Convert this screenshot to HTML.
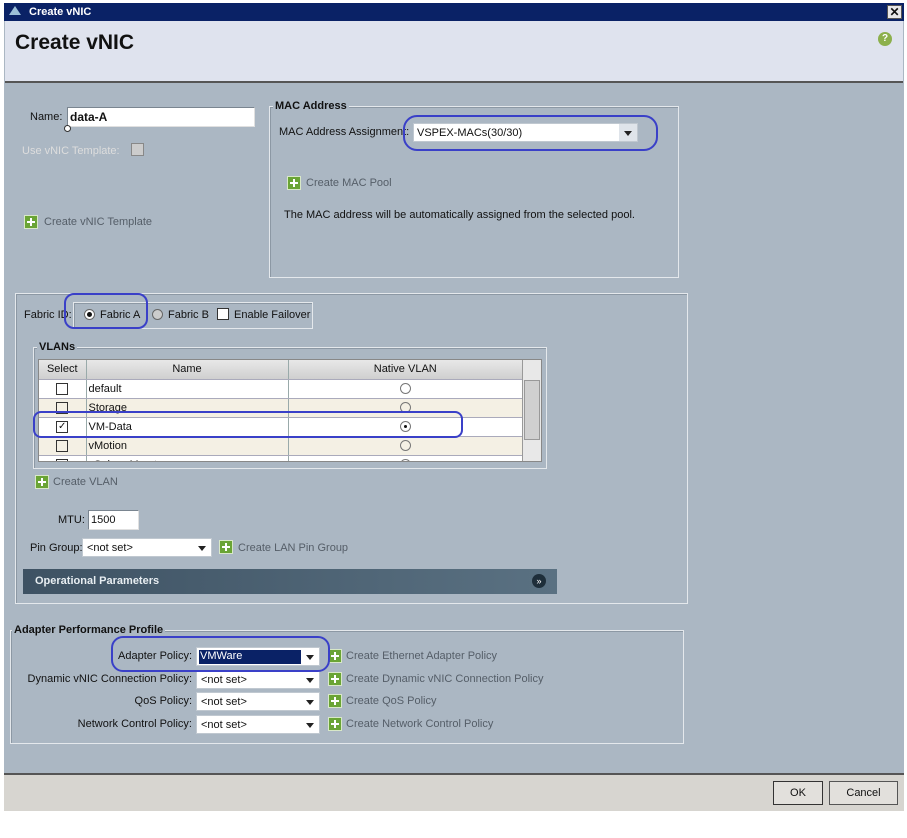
<!DOCTYPE html>
<html><head><meta charset="utf-8"><style>
*{box-sizing:border-box;margin:0;padding:0}
body{width:907px;height:838px;background:#fff;position:relative;font-family:"Liberation Sans",sans-serif;font-size:11px;color:#111;overflow:hidden}
.a{position:absolute}
.fs{position:absolute;border:1px solid #e4e8ec;box-shadow:inset 1px 1px 0 #8c98a4}
.lg{position:absolute;background:#abb7c3;font-weight:bold;font-size:11px;padding:0 2px;color:#111}
.inp{position:absolute;background:#fff;border:1px solid #7a8590;border-right-color:#e0e0e0;border-bottom-color:#e0e0e0}
.sel{position:absolute;background:#fff;border:1px solid #c0c8d0}
.sel .ar{position:absolute;right:0;top:0;bottom:0;width:18px;background:#dfe4ea}
.sel .ar:after{content:"";position:absolute;left:5px;top:7px;border-left:4px solid transparent;border-right:4px solid transparent;border-top:5px solid #222}
.plus{position:absolute;width:14px;height:14px;background:#6aa435;border:1px solid #d8e8c8}
.plus:before{content:"";position:absolute;left:2px;top:5px;width:8px;height:2px;background:#fff}
.plus:after{content:"";position:absolute;left:5px;top:2px;width:2px;height:8px;background:#fff}
.lnk{position:absolute;color:#555e68}
.cb{position:absolute;width:12px;height:12px;background:#fff;border:1px solid #333}
.rd{position:absolute;width:11px;height:11px;border-radius:50%;border:1px solid #666;background:#fff}
.ov{position:absolute;border:2.5px solid #3a40c8;border-radius:10px}
td,th{font-size:11px;font-weight:normal;border-right:1px solid #9aa;border-bottom:1px solid #aab;height:19px;padding:0 2px}
.r{display:inline-block;width:11px;height:11px;border-radius:50%;border:1px solid #777;vertical-align:middle;position:relative}
.r.on:after{content:"";position:absolute;left:3px;top:3px;width:3px;height:3px;border-radius:50%;background:#111}
.c{display:inline-block;width:12px;height:12px;border:1px solid #333;vertical-align:middle;font-size:10px;line-height:10px}
</style></head><body>
<div class="a" style="left:4px;top:3px;width:900px;height:808px;background:#abb7c3"></div>
<div class="a" style="left:4px;top:3px;width:900px;height:18px;background:#0a2266;color:#fff;font-weight:bold;font-size:11px;padding:3px 0 0 25px">Create vNIC</div>
<div class="a" style="left:9px;top:6px;width:0;height:0;border-left:6px solid transparent;border-right:6px solid transparent;border-bottom:9px solid #9cc0d8"></div>
<div class="a" style="left:887px;top:5px;width:15px;height:14px;background:#e8e8e8;border:1px solid #555;font-size:12px;font-weight:bold;line-height:12px;text-align:center">✕</div>
<div class="a" style="left:5px;top:21px;width:898px;height:62px;background:#dfe3ee;border-bottom:2px solid #555"></div>
<div class="a" style="left:15px;top:31px;font-size:21px;font-weight:bold">Create vNIC</div>
<div class="a" style="left:878px;top:32px;width:14px;height:14px;border-radius:50%;background:#8cb04c;color:#fff;font-size:10px;font-weight:bold;text-align:center;line-height:14px">?</div>

<div class="a" style="left:30px;top:111px">Name:</div>
<div class="inp" style="left:67px;top:107px;width:188px;height:20px;font-weight:bold;font-size:12px;padding:2px 2px">data-A</div>
<div class="a" style="left:64px;top:125px;width:7px;height:7px;border:1px solid #333;border-radius:50%;background:#fff"></div>
<div class="a" style="left:22px;top:145px;color:#ddd">Use vNIC Template:</div>
<div class="a" style="left:131px;top:143px;width:13px;height:13px;background:#ccc;border:1px solid #888"></div>
<div class="plus" style="left:24px;top:215px"></div><div class="lnk" style="left:44px;top:216px">Create vNIC Template</div>

<div class="fs" style="left:269px;top:106px;width:410px;height:172px"></div>
<div class="lg" style="left:273px;top:100px">MAC Address</div>
<div class="a" style="left:279px;top:126px">MAC Address Assignment:</div>
<div class="sel" style="left:413px;top:123px;width:225px;height:19px;padding:3px 3px">VSPEX-MACs(30/30)<div class="ar"></div></div>
<div class="plus" style="left:287px;top:176px"></div><div class="lnk" style="left:306px;top:177px">Create MAC Pool</div>
<div class="a" style="left:284px;top:209px">The MAC address will be automatically assigned from the selected pool.</div>
<div class="ov" style="left:403px;top:115px;width:255px;height:36px;border-radius:14px"></div>

<div class="fs" style="left:15px;top:293px;width:673px;height:311px"></div>
<div class="a" style="left:24px;top:309px">Fabric ID:</div>
<div class="a" style="left:73px;top:302px;width:240px;height:27px;border:1px solid #e4e8ec;box-shadow:inset 1px 1px 0 #8c98a4"></div>
<div class="rd" style="left:84px;top:309px"></div><div class="a" style="left:87px;top:312px;width:5px;height:5px;border-radius:50%;background:#111"></div>
<div class="a" style="left:100px;top:309px">Fabric A</div>
<div class="rd" style="left:152px;top:309px;background:#ccc"></div>
<div class="a" style="left:168px;top:309px">Fabric B</div>
<div class="cb" style="left:217px;top:308px"></div>
<div class="a" style="left:234px;top:309px">Enable Failover</div>
<div class="ov" style="left:64px;top:293px;width:84px;height:36px"></div>

<div class="fs" style="left:33px;top:347px;width:514px;height:122px"></div>
<div class="lg" style="left:37px;top:341px">VLANs</div>
<div class="a" style="left:38px;top:359px;width:504px;height:103px;background:#fff;overflow:hidden;border:1px solid #888">
<table style="border-collapse:collapse;width:484px;table-layout:fixed">
<tr style="background:linear-gradient(#e8e8e8,#cfcfcf)"><th style="width:47px">Select</th><th style="width:202px">Name</th><th>Native VLAN</th></tr>
<tr><td style="text-align:center"><span class="c"></span></td><td>default</td><td style="text-align:center"><span class="r"></span></td></tr>
<tr style="background:#f4f0e4"><td style="text-align:center"><span class="c"></span></td><td>Storage</td><td style="text-align:center"><span class="r"></span></td></tr>
<tr><td style="text-align:center"><span class="c">✓</span></td><td>VM-Data</td><td style="text-align:center"><span class="r on"></span></td></tr>
<tr style="background:#f4f0e4"><td style="text-align:center"><span class="c"></span></td><td>vMotion</td><td style="text-align:center"><span class="r"></span></td></tr>
<tr><td style="text-align:center"><span class="c"></span></td><td>vSphereMgmt</td><td style="text-align:center"><span class="r"></span></td></tr>
</table>
<div class="a" style="right:0;top:0;width:19px;height:103px;background:#e8e8e8;border-left:1px solid #999"></div>
<div class="a" style="right:1px;top:20px;width:16px;height:60px;background:#d0d0d0;border:1px solid #999"></div>
</div>
<div class="ov" style="left:33px;top:411px;width:430px;height:27px;border-radius:8px"></div>
<div class="plus" style="left:35px;top:475px"></div><div class="lnk" style="left:53px;top:476px">Create VLAN</div>
<div class="a" style="left:58px;top:514px">MTU:</div>
<div class="inp" style="left:88px;top:510px;width:51px;height:20px;padding:3px 2px">1500</div>
<div class="a" style="left:30px;top:542px">Pin Group:</div>
<div class="sel" style="left:82px;top:538px;width:130px;height:19px;padding:3px 4px">&lt;not set&gt;<div class="ar" style="background:#fff"></div></div>
<div class="plus" style="left:219px;top:540px"></div><div class="lnk" style="left:238px;top:542px">Create LAN Pin Group</div>
<div class="a" style="left:23px;top:569px;width:534px;height:25px;background:linear-gradient(90deg,#3e5263,#5a7182);color:#e8eef2;font-weight:bold;padding:6px 0 0 12px">Operational Parameters</div>
<div class="a" style="left:532px;top:574px;width:14px;height:14px;border-radius:50%;background:#1e2e3a;color:#fff;font-size:9px;text-align:center;line-height:14px">»</div>

<div class="fs" style="left:10px;top:630px;width:674px;height:114px"></div>
<div class="lg" style="left:12px;top:624px">Adapter Performance Profile</div>
<div class="a" style="left:20px;top:650px;width:172px;text-align:right">Adapter Policy:</div>
<div class="a" style="left:20px;top:673px;width:172px;text-align:right;white-space:nowrap">Dynamic vNIC Connection Policy:</div>
<div class="a" style="left:20px;top:695px;width:172px;text-align:right">QoS Policy:</div>
<div class="a" style="left:20px;top:718px;width:172px;text-align:right">Network Control Policy:</div>
<div class="sel" style="left:196px;top:647px;width:124px;height:19px;padding:2px 2px"><span style="display:inline-block;background:#0a2266;color:#fff;width:104px;height:14px;padding-left:1px">VMWare</span><div class="ar" style="background:#fff"></div></div>
<div class="sel" style="left:196px;top:670px;width:124px;height:19px;padding:3px 4px">&lt;not set&gt;<div class="ar" style="background:#fff"></div></div>
<div class="sel" style="left:196px;top:692px;width:124px;height:19px;padding:3px 4px">&lt;not set&gt;<div class="ar" style="background:#fff"></div></div>
<div class="sel" style="left:196px;top:715px;width:124px;height:19px;padding:3px 4px">&lt;not set&gt;<div class="ar" style="background:#fff"></div></div>
<div class="plus" style="left:328px;top:649px"></div><div class="lnk" style="left:346px;top:650px">Create Ethernet Adapter Policy</div>
<div class="plus" style="left:328px;top:672px"></div><div class="lnk" style="left:346px;top:673px">Create Dynamic vNIC Connection Policy</div>
<div class="plus" style="left:328px;top:694px"></div><div class="lnk" style="left:346px;top:695px">Create QoS Policy</div>
<div class="plus" style="left:328px;top:717px"></div><div class="lnk" style="left:346px;top:718px">Create Network Control Policy</div>
<div class="ov" style="left:111px;top:636px;width:219px;height:36px;border-radius:12px"></div>

<div class="a" style="left:4px;top:773px;width:900px;height:38px;background:#d7d5d0;border-top:2px solid #555"></div>
<div class="a" style="left:773px;top:781px;width:50px;height:24px;background:#e2e0dc;border:1px solid #333;text-align:center;line-height:22px">OK</div>
<div class="a" style="left:829px;top:781px;width:69px;height:24px;background:#e2e0dc;border:1px solid #555;text-align:center;line-height:22px">Cancel</div>
</body></html>
